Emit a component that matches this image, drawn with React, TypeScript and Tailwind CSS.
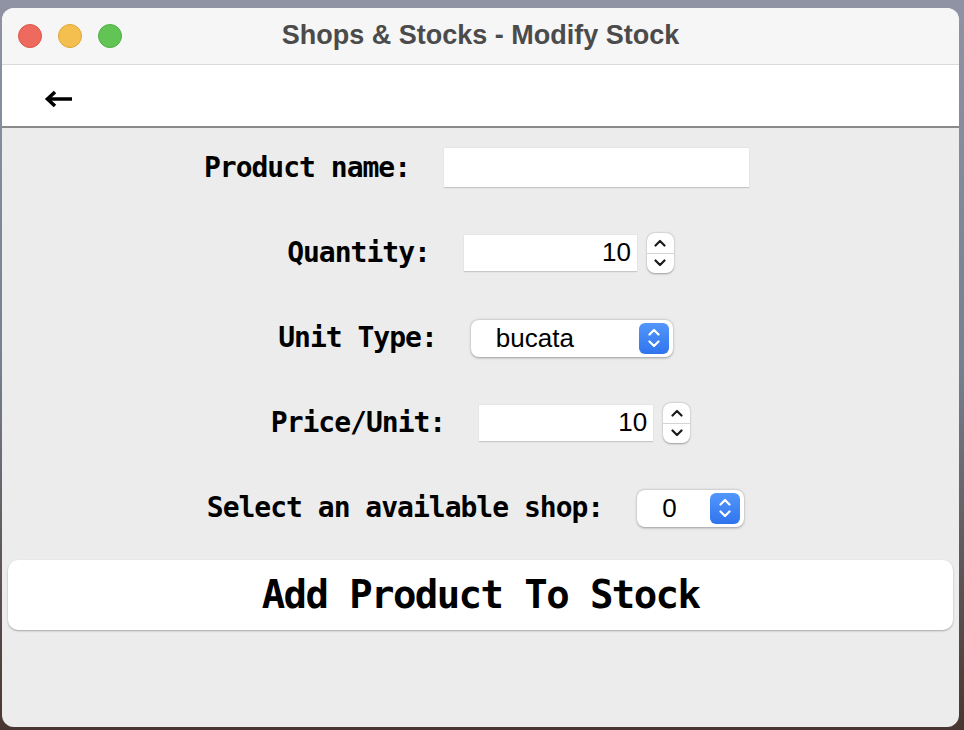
import React from 'react';

const mono = { fontFamily: '"DejaVu Sans Mono", "Liberation Mono", monospace' };
const sans = { fontFamily: '"Liberation Sans", Arial, sans-serif' };

function Chevron({ up, color }: { up?: boolean; color: string }) {
  return (
    <svg width="12" height="8" viewBox="0 0 12 8" fill="none">
      <path
        d={up ? 'M1.5 6.5 L6 2 L10.5 6.5' : 'M1.5 1.5 L6 6 L10.5 1.5'}
        stroke={color}
        strokeWidth="2.2"
        strokeLinecap="round"
        strokeLinejoin="round"
      />
    </svg>
  );
}

function Stepper() {
  return (
    <div className="flex flex-col w-[27px] h-[40px] bg-white rounded-[8px] shadow-[0_0.5px_2px_rgba(0,0,0,0.35)] overflow-hidden">
      <div className="flex-1 flex items-center justify-center border-b border-[#d4d4d4]">
        <Chevron up color="#1a1a1a" />
      </div>
      <div className="flex-1 flex items-center justify-center">
        <Chevron color="#1a1a1a" />
      </div>
    </div>
  );
}

function NumberField({ value, width }: { value: string; width: string }) {
  return (
    <div className="flex items-center gap-[10px]">
      <div
        className={`${width} h-[37px] bg-white border-b border-[#c8c8c8] shadow-[0_0_0_0.5px_#dddddd] flex items-center justify-end pr-[6px] text-[26px] text-black`}
        style={sans}
      >
        {value}
      </div>
      <Stepper />
    </div>
  );
}

function SelectBox({ value, width, textPad }: { value: string; width: string; textPad: string }) {
  return (
    <div
      className={`${width} h-[37px] bg-white rounded-[8px] shadow-[0_0.5px_2.5px_rgba(0,0,0,0.35)] flex items-center justify-between pr-[4px]`}
    >
      <span className={`${textPad} text-[26px] text-black`} style={sans}>
        {value}
      </span>
      <div className="w-[30px] h-[31px] rounded-[6px] bg-gradient-to-b from-[#5396fb] to-[#2f74ee] flex flex-col items-center justify-center gap-[4px]">
        <Chevron up color="#ffffff" />
        <Chevron color="#ffffff" />
      </div>
    </div>
  );
}

function Row({ label, shift = '', children }: { label: string; shift?: string; children: React.ReactNode }) {
  return (
    <div className={`h-[40px] flex items-center justify-center gap-[34px] ${shift}`}>
      <span className="text-[28px] tracking-[-1px] font-bold text-black leading-none" style={mono}>
        {label}
      </span>
      {children}
    </div>
  );
}

export default function App() {
  return (
    <div className="w-[964px] h-[730px] bg-gradient-to-b from-[#8f93a3] via-[#76808f] to-[#4a3630] pl-[2px] pr-[5px] pt-[8px] pb-[3px]">
      <div className="w-full h-full rounded-[12px] overflow-hidden flex flex-col bg-[#ececec]">
        {/* Title bar */}
        <div className="h-[57px] shrink-0 bg-[#f6f6f6] border-b border-[#dadada] relative flex items-center justify-center">
          <div className="absolute left-[16px] top-[16px] flex gap-[16px]">
            <span className="w-[24px] h-[24px] rounded-full bg-[#ee6a5f] border border-[#d8574c]" />
            <span className="w-[24px] h-[24px] rounded-full bg-[#f5bf4f] border border-[#dea73a]" />
            <span className="w-[24px] h-[24px] rounded-full bg-[#61c454] border border-[#4eae42]" />
          </div>
          <span className="text-[27px] font-bold text-[#4b4b4b] -mt-[2px]" style={sans}>
            Shops &amp; Stocks - Modify Stock
          </span>
        </div>

        {/* Toolbar */}
        <div className="h-[63px] shrink-0 bg-white border-b-2 border-[#8a8a8a] flex items-center pl-[42px]">
          <svg width="30" height="18" viewBox="0 0 30 18" className="mt-[7px]">
            <path d="M5 9 H28" stroke="#000" strokeWidth="3.6" />
            <path d="M11 2 L3.5 9 L11 16" stroke="#000" strokeWidth="3.6" fill="none" strokeLinejoin="miter" />
          </svg>
        </div>

        {/* Form */}
        <div className="flex flex-col gap-[45px] pt-[20px]">
          <Row label="Product name:" shift="pr-[8px]">
            <div className="w-[305px] h-[40px] bg-white border-b border-[#c8c8c8] shadow-[0_0_0_0.5px_#dddddd]" />
          </Row>
          <Row label="Quantity:">
            <NumberField value="10" width="w-[173px]" />
          </Row>
          <Row label="Unit Type:" shift="pr-[10px]">
            <SelectBox value="bucata" width="w-[202px]" textPad="pl-[25px]" />
          </Row>
          <Row label="Price/Unit:">
            <NumberField value="10" width="w-[174px]" />
          </Row>
          <Row label="Select an available shop:" shift="pr-[10px]">
            <SelectBox value="0" width="w-[107px]" textPad="pl-[25px]" />
          </Row>
        </div>

        <button
          className="mx-[6px] mt-[32px] h-[70px] bg-white rounded-[10px] shadow-[0_1px_2px_rgba(0,0,0,0.3)] flex items-center justify-center text-[39px] tracking-[-1.6px] font-bold text-black"
          style={mono}
        >
          Add Product To Stock
        </button>
      </div>
    </div>
  );
}
